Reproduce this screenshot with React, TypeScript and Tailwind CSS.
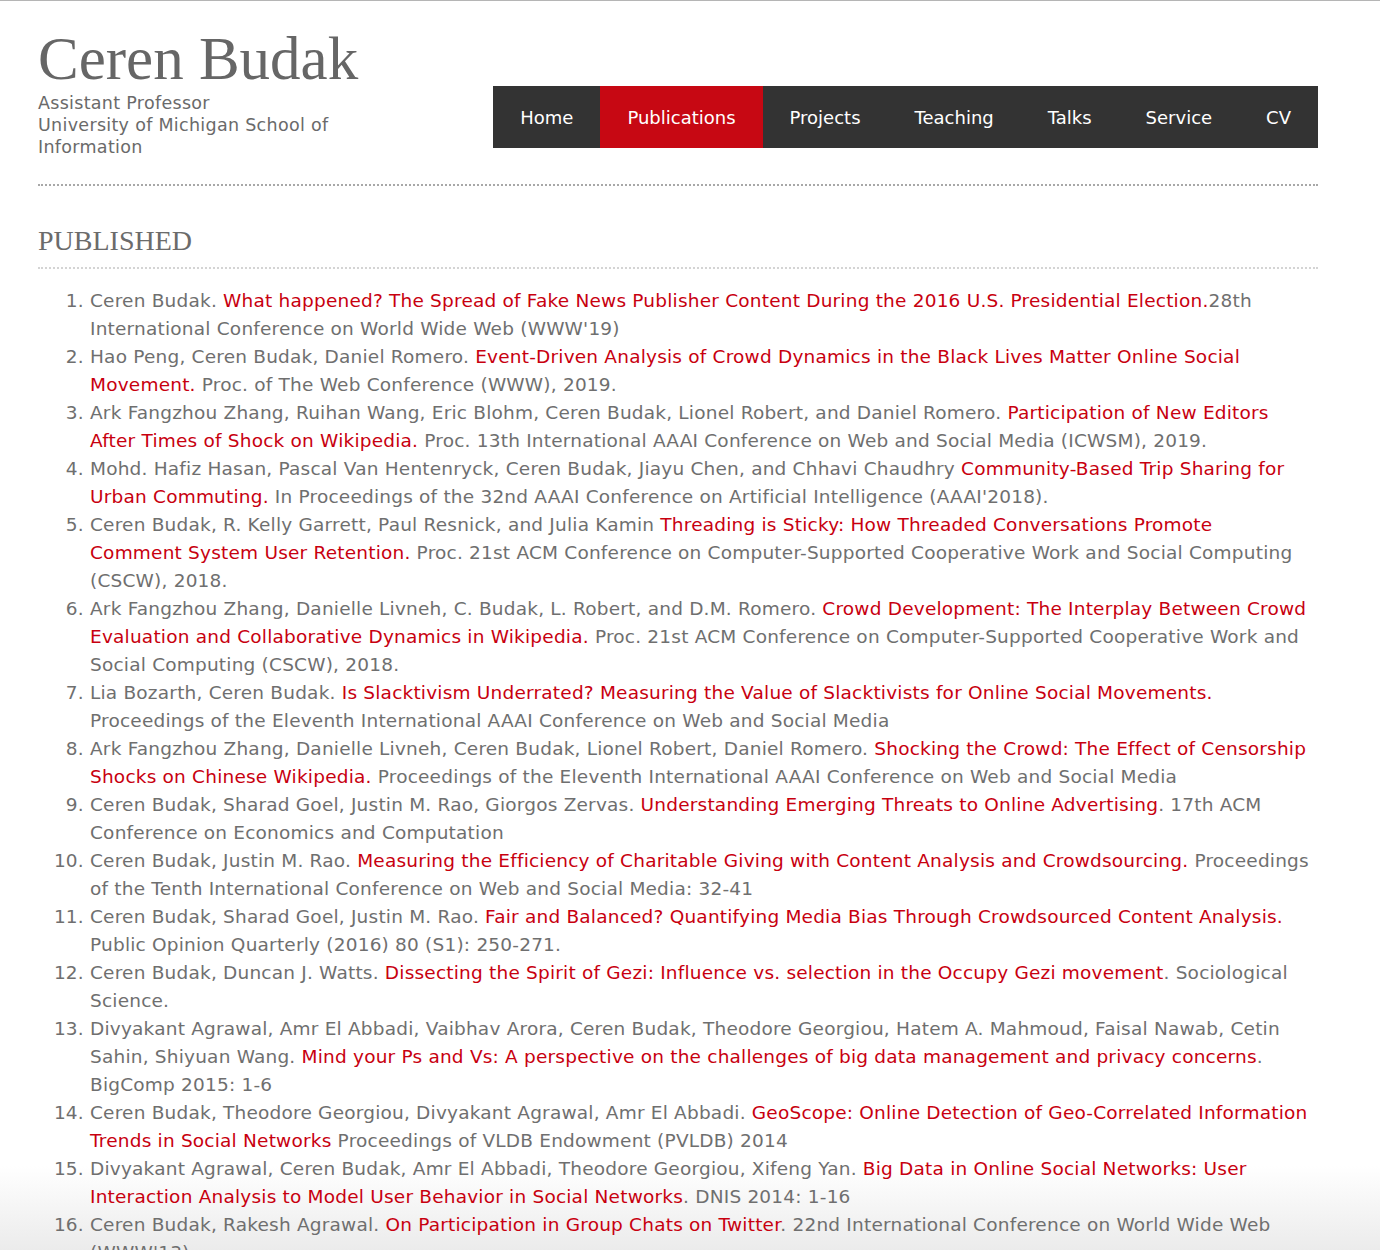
import React from 'react';

const pubs: [string, string, string][] = [
  ['Ceren Budak. ', 'What happened? The Spread of Fake News Publisher Content During the 2016 U.S. Presidential Election.', '28th International Conference on World Wide Web (WWW\'19)'],
  ['Hao Peng, Ceren Budak, Daniel Romero. ', 'Event-Driven Analysis of Crowd Dynamics in the Black Lives Matter Online Social Movement.', ' Proc. of The Web Conference (WWW), 2019.'],
  ['Ark Fangzhou Zhang, Ruihan Wang, Eric Blohm, Ceren Budak, Lionel Robert, and Daniel Romero. ', 'Participation of New Editors After Times of Shock on Wikipedia.', ' Proc. 13th International AAAI Conference on Web and Social Media (ICWSM), 2019.'],
  ['Mohd. Hafiz Hasan, Pascal Van Hentenryck, Ceren Budak, Jiayu Chen, and Chhavi Chaudhry ', 'Community-Based Trip Sharing for Urban Commuting.', ' In Proceedings of the 32nd AAAI Conference on Artificial Intelligence (AAAI\'2018).'],
  ['Ceren Budak, R. Kelly Garrett, Paul Resnick, and Julia Kamin ', 'Threading is Sticky: How Threaded Conversations Promote Comment System User Retention.', ' Proc. 21st ACM Conference on Computer-Supported Cooperative Work and Social Computing (CSCW), 2018.'],
  ['Ark Fangzhou Zhang, Danielle Livneh, C. Budak, L. Robert, and D.M. Romero. ', 'Crowd Development: The Interplay Between Crowd Evaluation and Collaborative Dynamics in Wikipedia.', ' Proc. 21st ACM Conference on Computer-Supported Cooperative Work and Social Computing (CSCW), 2018.'],
  ['Lia Bozarth, Ceren Budak. ', 'Is Slacktivism Underrated? Measuring the Value of Slacktivists for Online Social Movements.', ' Proceedings of the Eleventh International AAAI Conference on Web and Social Media'],
  ['Ark Fangzhou Zhang, Danielle Livneh, Ceren Budak, Lionel Robert, Daniel Romero. ', 'Shocking the Crowd: The Effect of Censorship Shocks on Chinese Wikipedia.', ' Proceedings of the Eleventh International AAAI Conference on Web and Social Media'],
  ['Ceren Budak, Sharad Goel, Justin M. Rao, Giorgos Zervas. ', 'Understanding Emerging Threats to Online Advertising', '. 17th ACM Conference on Economics and Computation'],
  ['Ceren Budak, Justin M. Rao. ', 'Measuring the Efficiency of Charitable Giving with Content Analysis and Crowdsourcing.', ' Proceedings of the Tenth International Conference on Web and Social Media: 32-41'],
  ['Ceren Budak, Sharad Goel, Justin M. Rao. ', 'Fair and Balanced? Quantifying Media Bias Through Crowdsourced Content Analysis.', ' Public Opinion Quarterly (2016) 80 (S1): 250-271.'],
  ['Ceren Budak, Duncan J. Watts. ', 'Dissecting the Spirit of Gezi: Influence vs. selection in the Occupy Gezi movement', '. Sociological Science.'],
  ['Divyakant Agrawal, Amr El Abbadi, Vaibhav Arora, Ceren Budak, Theodore Georgiou, Hatem A. Mahmoud, Faisal Nawab, Cetin Sahin, Shiyuan Wang. ', 'Mind your Ps and Vs: A perspective on the challenges of big data management and privacy concerns', '. BigComp 2015: 1-6'],
  ['Ceren Budak, Theodore Georgiou, Divyakant Agrawal, Amr El Abbadi. ', 'GeoScope: Online Detection of Geo-Correlated Information Trends in Social Networks', ' Proceedings of VLDB Endowment (PVLDB) 2014'],
  ['Divyakant Agrawal, Ceren Budak, Amr El Abbadi, Theodore Georgiou, Xifeng Yan. ', 'Big Data in Online Social Networks: User Interaction Analysis to Model User Behavior in Social Networks', '. DNIS 2014: 1-16'],
  ['Ceren Budak, Rakesh Agrawal. ', 'On Participation in Group Chats on Twitter', '. 22nd International Conference on World Wide Web (WWW\'13)'],
];

const navItems = ['Home', 'Publications', 'Projects', 'Teaching', 'Talks', 'Service', 'CV'];

const App: React.FC = () => {
  return (
    <div className="h-[1250px] overflow-hidden border-t border-[#b5b5b5] bg-[linear-gradient(to_bottom,#ffffff_1165px,#ebebeb_1250px)] font-['DejaVu_Sans',sans-serif] text-[#6f6f6f]">
      <div className="ml-[38px] w-[1280px]">
        {/* header */}
        <div className="flex items-start justify-between">
          <div className="pt-[27px]">
            <h1 className="font-['Liberation_Serif',serif] text-[61px] leading-[61px] text-[#666]">Ceren Budak</h1>
            <div className="mt-[3px] w-[300px] text-[17.5px] leading-[22px] tracking-[0.3px] text-[#6a6a6a]">
              Assistant Professor
              <br />
              University of Michigan School of Information
            </div>
          </div>
          <nav className="mt-[85px] flex h-[62px] bg-[#333333]">
            {navItems.map((item) => (
              <a
                key={item}
                href="#"
                className={
                  item === 'Publications'
                    ? 'flex items-center bg-[#c70813] px-[27px] text-[18px] text-white'
                    : 'flex items-center px-[27px] text-[18px] text-white'
                }
              >
                {item}
              </a>
            ))}
          </nav>
        </div>

        <div className="mt-[26px] border-t-2 border-dotted border-[#a8a8a8]" />

        <h2 className="mt-[41px] font-['Liberation_Serif',serif] text-[28px] leading-[28px] text-[#6b6b6b]">PUBLISHED</h2>
        <div className="mt-[12px] border-t-2 border-dotted border-[#d4d4d4]" />

        {/* publication list */}
        <ol className="mt-[18px] list-decimal pl-[52px] pr-[8.5px] text-[18.5px] leading-[28px] tracking-[0.2px]">
          {pubs.map(([pre, link, post], idx) => (
            <li key={idx}>
              {pre}
              <a href="#" className="text-[#c8000f]">{link}</a>
              {post}
            </li>
          ))}
        </ol>
      </div>
    </div>
  );
};

export default App;
